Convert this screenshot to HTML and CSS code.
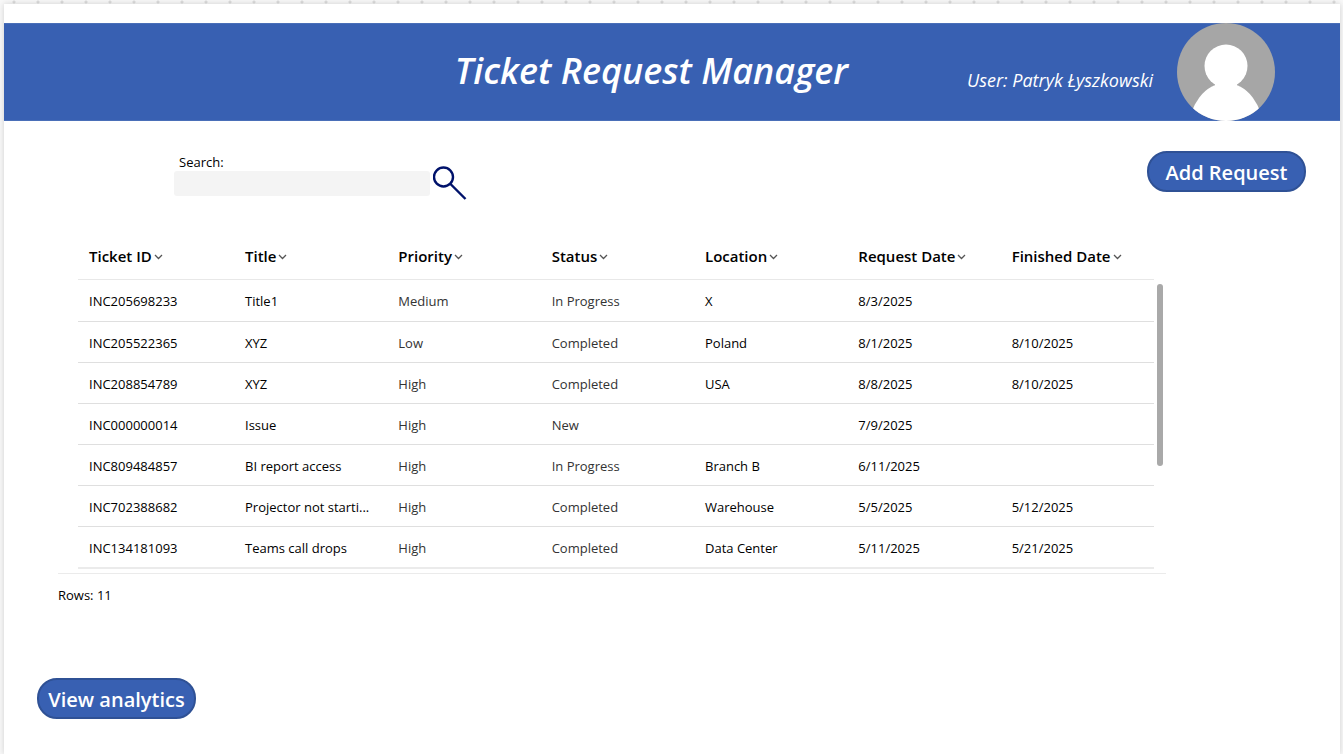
FILE: index.html
```
<!DOCTYPE html>
<html lang="en">
<head>
<meta charset="utf-8">
<title>Ticket Request Manager</title>
<link rel="stylesheet" href="styles.css">
</head>
<body>
<svg width="0" height="0" class="defs" aria-hidden="true"><symbol id="chevron" viewBox="0 0 9 6"><path d="M1 1l3.500 3.500L8 1" fill="none" stroke="#555" stroke-width="1.300"/></symbol></svg>
<main class="screen">
  <header class="banner">
    <h1 class="title">Ticket Request Manager</h1>
    <p class="user">User: Patryk Łyszkowski</p>
    <svg class="avatar" viewBox="0 0 98 98" role="img" aria-label="User photo">
      <defs><clipPath id="round"><circle cx="49" cy="49" r="49"/></clipPath></defs>
      <g clip-path="url(#round)"><rect width="98" height="98" fill="#a6a6a6"/><circle cx="49" cy="43" r="21.500" fill="#fff"/><ellipse cx="49" cy="110" rx="38" ry="50" fill="#fff"/><path d="M38 60h22v5H38z" fill="#fff"/></g>
    </svg>
  </header>
  <div class="toolbar">
    <form class="search">
      <div class="field">
        <label class="label" for="q">Search:</label>
        <input class="input" id="q" type="text">
      </div>
      <button class="find" type="button" aria-label="Search"><svg width="34" height="34" viewBox="0 0 34 34" fill="none" stroke="#00126b"><circle cx="10.500" cy="11" r="9.500" stroke-width="2.400"/><path d="M17.500 18L32.500 33" stroke-width="2.400"/></svg></button>
    </form>
    <button class="pill" type="button">Add Request</button>
  </div>
  <section class="tickets">
    <div class="viewport">
      <div class="grid">
      <table class="table">
        <thead><tr>
          <th class="first">Ticket ID<svg class="chev"><use href="#chevron"/></svg></th>
          <th>Title<svg class="chev"><use href="#chevron"/></svg></th>
          <th>Priority<svg class="chev"><use href="#chevron"/></svg></th>
          <th>Status<svg class="chev"><use href="#chevron"/></svg></th>
          <th>Location<svg class="chev"><use href="#chevron"/></svg></th>
          <th>Request Date<svg class="chev"><use href="#chevron"/></svg></th>
          <th>Finished Date<svg class="chev"><use href="#chevron"/></svg></th>
        </tr></thead>
        <tbody>
          <tr><td>INC205698233</td><td>Title1</td><td class="choice">Medium</td><td class="choice">In Progress</td><td>X</td><td>8/3/2025</td><td></td></tr>
          <tr><td>INC205522365</td><td>XYZ</td><td class="choice">Low</td><td class="choice">Completed</td><td>Poland</td><td>8/1/2025</td><td>8/10/2025</td></tr>
          <tr><td>INC208854789</td><td>XYZ</td><td class="choice">High</td><td class="choice">Completed</td><td>USA</td><td>8/8/2025</td><td>8/10/2025</td></tr>
          <tr><td>INC000000014</td><td>Issue</td><td class="choice">High</td><td class="choice">New</td><td></td><td>7/9/2025</td><td></td></tr>
          <tr><td>INC809484857</td><td>BI report access</td><td class="choice">High</td><td class="choice">In Progress</td><td>Branch B</td><td>6/11/2025</td><td></td></tr>
          <tr><td>INC702388682</td><td>Projector not starti...</td><td class="choice">High</td><td class="choice">Completed</td><td>Warehouse</td><td>5/5/2025</td><td>5/12/2025</td></tr>
          <tr><td>INC134181093</td><td>Teams call drops</td><td class="choice">High</td><td class="choice">Completed</td><td>Data Center</td><td>5/11/2025</td><td>5/21/2025</td></tr>
        </tbody>
      </table>
      </div>
      <div class="track"><div class="thumb"></div></div>
    </div>
    <p class="count">Rows: 11</p>
  </section>
  <footer class="actions"><button class="pill" type="button">View analytics</button></footer>
</main>
</body>
</html>
```
FILE: styles.css
```
* { box-sizing: border-box; }
body {
  margin: 0;
  min-height: 100vh;
  display: flex;
  padding: 4px 3px 0 4px;
  background: #f8f8f8 radial-gradient(circle, #dcdcdc 1px, transparent 2px) 2px -10px / 24px 24px;
  font: 13px/18px "Open Sans", "Noto Sans", sans-serif;
  color: #000;
}
h1, p { margin: 0; }
button { font: inherit; }
.defs { position: absolute; }
.screen {
  flex: 1;
  min-width: 0;
  padding-top: 19px;
  background: #fff;
  box-shadow: 0 0 6px rgba(0, 0, 0, .16);
}
.banner {
  display: flex;
  align-items: center;
  justify-content: flex-end;
  min-height: 98px;
  padding-right: 65px;
  background: #3860b2;
  border: solid #4a6fb8;
  border-width: 1px 0;
  color: #fff;
}
.title { margin-right: 119px; padding-bottom: 2px; font-size: 36px; line-height: 48px; font-weight: 600; font-style: italic; }
.user { margin: 16px 24px 0 0; font-size: 18px; line-height: 24px; font-style: italic; }
.avatar { width: 98px; height: 98px; margin: -1px 0; }
.toolbar {
  display: flex;
  justify-content: space-between;
  align-items: flex-start;
  padding: 30px 34px 0 170px;
}
.search { display: flex; align-items: flex-end; gap: 3px; padding-top: 2px; }
.field { display: flex; flex-direction: column; }
.label { padding-left: 5px; }
.input { width: 256px; height: 25px; border: 0; border-radius: 3px; background: #f4f4f4; font: inherit; }
.find { display: block; height: 34px; margin-bottom: -4px; padding: 0; border: 0; background: none; }
.find svg { display: block; }
.pill {
  width: 159px;
  height: 41px;
  padding: 2px 0 0;
  border: 2px solid #2f5195;
  border-radius: 20px;
  background: #3860b2;
  color: #fff;
  font-size: 20px;
  line-height: 28px;
  font-weight: 600;
}
.tickets { margin: 38px 174px 0 54px; }
.viewport {
  display: flex;
  padding: 0 3px 4px 20px;
  border-bottom: 1px solid #ebebeb;
}
.grid { flex: 1; min-width: 0; }
.table { width: 100%; table-layout: fixed; border-collapse: separate; border-spacing: 0; text-align: left; }
.table th {
  height: 46px;
  padding: 0 0 2px 11px;
  border-bottom: 1px solid #e8e8e8;
  font-size: 15px;
  font-weight: 600;
  white-space: nowrap;
}
.table .first { width: 156px; }
.chev { width: 9px; height: 6px; margin-left: 2px; vertical-align: 2px; }
.table td {
  height: 41px;
  padding: 1px 12px 0 11px;
  border-bottom: 1px solid #dfdfdf;
  overflow: hidden;
  text-overflow: ellipsis;
  white-space: nowrap;
}
.table tbody tr:first-child td { height: 42px; padding-top: 0; }
.table tbody tr:last-child td { height: 42px; padding-top: 2px; border-bottom: 2px solid #ebebeb; }
.table .choice { color: #333; }
.track { width: 9px; padding: 50px 0 0 3px; }
.thumb { width: 6px; height: 182px; border-radius: 3px; background: #a9a9a9; }
.count { padding-top: 12px; }
.actions { padding: 74px 33px 34px; }
```
